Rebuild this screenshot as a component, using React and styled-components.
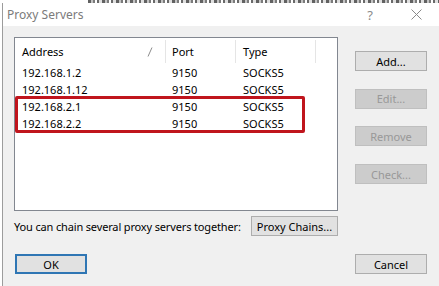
import React from "react";
import styled, { createGlobalStyle } from "styled-components";

const GlobalStyle = createGlobalStyle`
  html, body {
    margin: 0;
    padding: 0;
    background: #ffffff;
    overflow: hidden;
  }
  body {
    font-family: "Noto Sans", "Open Sans", sans-serif;
    font-size: 11px;
  }
`;

const Page = styled.div`
  width: 439px;
  height: 286px;
  display: flex;
  flex-direction: column;
  overflow: hidden;
`;

// bottom edge of the window lying behind the dialog
const BehindStrip = styled.div`
  flex: 0 0 3px;
  margin-left: 88px;
  background: repeating-linear-gradient(
    90deg,
    #3a3a3a 0 3px,
    #b5b5b5 3px 5px,
    #5a5a5a 5px 7px,
    #ffffff 7px 9px,
    #444 9px 11px,
    #d8d8d8 11px 14px
  );
  opacity: 0.8;
`;

const Window = styled.div`
  flex: 1;
  margin-left: 2px;
  border-left: 1px solid #9c9c9c;
  background: #f0f0f0;
  display: flex;
  flex-direction: column;
`;

const TitleBar = styled.div`
  height: 23px;
  background: #ffffff;
  display: flex;
  align-items: center;
  padding-left: 4px;
`;

const Title = styled.div`
  flex: 1;
  color: #7b7b7b;
  font-size: 12px;
`;

const TitleButton = styled.div`
  width: 46px;
  height: 23px;
  display: flex;
  align-items: center;
  justify-content: center;
  color: #8a8a8a;
  font-size: 13px;
`;

const Content = styled.div`
  padding: 11px 12px 0 11px;
  display: flex;
  flex-direction: column;
`;

const MainRow = styled.div`
  display: flex;
  justify-content: space-between;
`;

const ListBox = styled.div`
  position: relative;
  width: 322px;
  height: 172px;
  border: 1px solid #828790;
  background: #ffffff;
`;

const Row = styled.div`
  display: flex;
  height: ${p => (p.header ? "25px" : "17px")};
  align-items: center;
  margin-bottom: ${p => (p.header ? "1px" : "0")};
`;

const Cell = styled.div`
  position: relative;
  width: ${p => p.w}px;
  height: 100%;
  box-sizing: border-box;
  padding-left: ${p => p.pad}px;
  display: flex;
  align-items: center;
  color: #000;
  font-size: 11px;
  white-space: nowrap;
  border-right: ${p => (p.header ? "1px solid #e5e5e5" : "none")};
  ${p => p.header && "height: 23px; margin-top: 2px; align-self: flex-start;"}
`;

const SortMark = styled.svg`
  position: absolute;
  right: 12px;
  top: 7px;
`;

const Highlight = styled.div`
  position: absolute;
  left: 0;
  top: 58px;
  width: 290px;
  height: 37px;
  box-sizing: border-box;
  border: 3px solid #c0151d;
  border-radius: 2px;
`;

const ButtonColumn = styled.div`
  display: flex;
  flex-direction: column;
  gap: 17.7px;
  padding-top: 14px;
`;

const Button = styled.div`
  width: ${p => p.w || 72}px;
  height: 20px;
  box-sizing: border-box;
  display: flex;
  align-items: center;
  justify-content: center;
  font-size: 11px;
  background: ${p => (p.disabled ? "#cccccc" : "#e1e1e1")};
  border: ${p =>
    p.primary
      ? "2px solid #2f76b4"
      : p.disabled
      ? "1px solid #bfbfbf"
      : "1px solid #adadad"};
  color: ${p => (p.disabled ? "#989898" : "#000")};
`;

const ChainRow = styled.div`
  width: 324px;
  margin-top: 5px;
  display: flex;
  align-items: center;
  justify-content: space-between;
  font-size: 11px;
  color: #000;
`;

const ChainText = styled.div`
  letter-spacing: -0.15px;
`;

const Footer = styled.div`
  margin-top: 18px;
  display: flex;
  justify-content: space-between;
  padding-left: 1px;
`;

const columns = [
  { key: "address", label: "Address", w: 151, pad: 7 },
  { key: "port", label: "Port", w: 70, pad: 6 },
  { key: "type", label: "Type", w: 80, pad: 7 },
];

const servers = [
  { id: 1, address: "192.168.1.2", port: 9150, type: "SOCKS5" },
  { id: 2, address: "192.168.1.12", port: 9150, type: "SOCKS5" },
  { id: 3, address: "192.168.2.1", port: 9150, type: "SOCKS5" },
  { id: 4, address: "192.168.2.2", port: 9150, type: "SOCKS5" },
];

const App = () => (
  <Page>
    <GlobalStyle />
    <BehindStrip />
    <Window>
      <TitleBar>
        <Title>Proxy Servers</Title>
        <TitleButton>?</TitleButton>
        <TitleButton>
          <svg width="11" height="11" viewBox="0 0 11 11">
            <path d="M0.5 0.5 L10.5 10.5 M10.5 0.5 L0.5 10.5" stroke="#8a8a8a" strokeWidth="1" />
          </svg>
        </TitleButton>
      </TitleBar>
      <Content>
        <MainRow>
          <ListBox>
            <Row header>
              {columns.map(c => (
                <Cell key={c.key} header w={c.w} pad={c.pad}>
                  {c.label}
                  {c.key === "address" && (
                    <SortMark width="6" height="10" viewBox="0 0 6 10">
                      <path d="M1 9.5 L5 0.5" stroke="#8c8c8c" strokeWidth="1" />
                    </SortMark>
                  )}
                </Cell>
              ))}
            </Row>
            {servers.map(s => (
              <Row key={s.id}>
                {columns.map(c => (
                  <Cell key={c.key} w={c.w} pad={c.pad}>
                    {s[c.key]}
                  </Cell>
                ))}
              </Row>
            ))}
            <Highlight />
          </ListBox>
          <ButtonColumn>
            <Button>Add...</Button>
            <Button disabled>Edit...</Button>
            <Button disabled>Remove</Button>
            <Button disabled>Check...</Button>
          </ButtonColumn>
        </MainRow>
        <ChainRow>
          <ChainText>You can chain several proxy servers together:</ChainText>
          <Button w={87}>Proxy Chains...</Button>
        </ChainRow>
        <Footer>
          <Button primary>OK</Button>
          <Button>Cancel</Button>
        </Footer>
      </Content>
    </Window>
  </Page>
);

export default App;
